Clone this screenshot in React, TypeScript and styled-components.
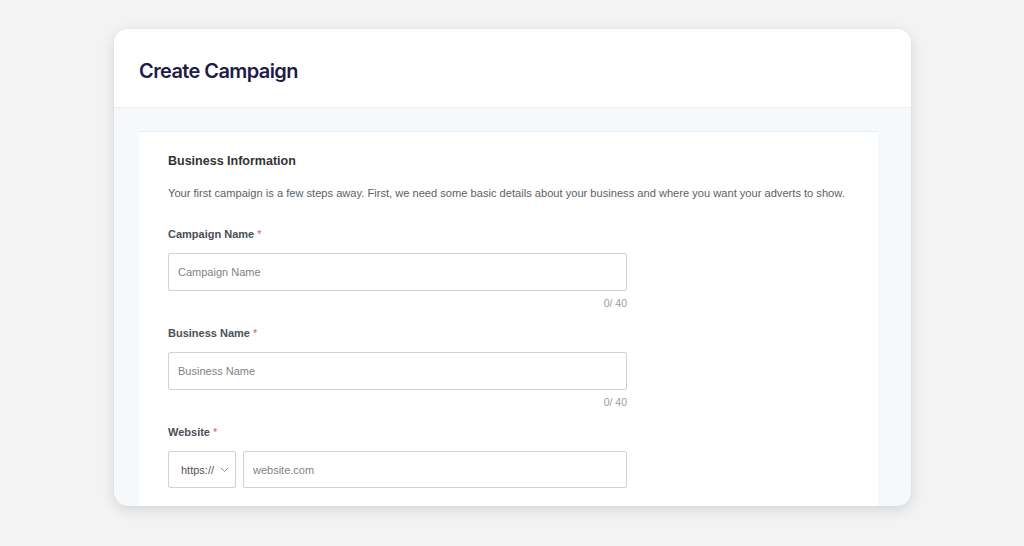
import React from "react";
import styled, { createGlobalStyle } from "styled-components";

const Global = createGlobalStyle`
  html, body { margin: 0; padding: 0; background: #f3f3f3; }
  body { font-family: "Liberation Sans", Arial, sans-serif; }
  * { box-sizing: border-box; }
`;

const Page = styled.div`
  width: 1024px;
  height: 546px;
  padding: 29px 113px 0 114px;
  overflow: hidden;
`;

const Card = styled.div`
  height: 477px;
  background: #f6f9fb;
  border-radius: 14px;
  overflow: hidden;
  box-shadow: 0 4px 14px rgba(0, 0, 0, 0.12), 0 0 2px rgba(0, 0, 0, 0.06);
  display: flex;
  flex-direction: column;
`;

const Header = styled.div`
  height: 79px;
  flex: none;
  background: #ffffff;
  border-bottom: 1px solid #e8eef3;
  display: flex;
  align-items: center;
  padding: 5px 0 0 25px;
`;

const Title = styled.h1`
  margin: 0;
  font-family: "Inter", sans-serif;
  font-weight: 600;
  font-size: 20px;
  letter-spacing: -0.6px;
  color: #1f1a48;
`;

const Body = styled.div`
  flex: 1;
  padding: 23px 33px 0 25px;
  display: flex;
`;

const Panel = styled.div`
  flex: 1;
  background: #ffffff;
  border-top: 1px solid #e3eef6;
  padding: 21px 29px 0 29px;
`;

const SectionTitle = styled.h2`
  margin: 0;
  font-size: 12.5px;
  line-height: 16px;
  font-weight: 700;
  color: #333333;
`;

const Description = styled.p`
  margin: 17px 0 0 0;
  font-size: 11.12px;
  line-height: 14px;
  color: #5b5f66;
  white-space: nowrap;
`;

const Field = styled.div<{ $first?: boolean }>`
  width: 459px;
  margin-top: ${(p) => (p.$first ? "27px" : "17px")};
  display: flex;
  flex-direction: column;
`;

const Label = styled.label`
  font-size: 11px;
  line-height: 14px;
  font-weight: 700;
  color: #4a4f57;
`;

const Required = styled.span`
  color: #e0575a;
  font-weight: 400;
  margin-left: 3px;
`;

const Input = styled.input`
  margin-top: 12px;
  height: 38px;
  width: 100%;
  border: 1.5px solid #d2d2d2;
  border-radius: 2px;
  padding: 0 9px;
  font-family: "Liberation Sans", Arial, sans-serif;
  font-size: 11px;
  color: #333;
  outline: none;
  &::placeholder { color: #808286; }
`;

const Counter = styled.div`
  margin-top: 6px;
  align-self: flex-end;
  font-size: 10.5px;
  line-height: 12px;
  color: #9a9a9a;
`;

const Row = styled.div`
  margin-top: 12px;
  display: flex;
  gap: 7px;
`;

const Select = styled.div`
  width: 68px;
  height: 37px;
  flex: none;
  border: 1.5px solid #d2d2d2;
  border-radius: 2px;
  display: flex;
  align-items: center;
  justify-content: space-between;
  padding: 0 6px 0 12px;
  font-size: 11px;
  color: #555;
`;

const UrlInput = styled(Input)`
  margin-top: 0;
  height: 37px;
  flex: 1;
`;

export default function App() {
  return (
    <>
      <Global />
      <Page>
        <Card>
          <Header>
            <Title>Create Campaign</Title>
          </Header>
          <Body>
            <Panel>
              <SectionTitle>Business Information</SectionTitle>
              <Description>
                Your first campaign is a few steps away. First, we need some basic details about your business and where you want your adverts to show.
              </Description>
              <Field $first>
                <Label>
                  Campaign Name<Required>*</Required>
                </Label>
                <Input placeholder="Campaign Name" />
                <Counter>0/ 40</Counter>
              </Field>
              <Field>
                <Label>
                  Business Name<Required>*</Required>
                </Label>
                <Input placeholder="Business Name" />
                <Counter>0/ 40</Counter>
              </Field>
              <Field>
                <Label>
                  Website<Required>*</Required>
                </Label>
                <Row>
                  <Select>
                    <span>https://</span>
                    <svg width="9" height="6" viewBox="0 0 9 6" fill="none">
                      <path d="M1 1l3.5 3.5L8 1" stroke="#9a9a9a" strokeWidth="1" />
                    </svg>
                  </Select>
                  <UrlInput placeholder="website.com" />
                </Row>
              </Field>
            </Panel>
          </Body>
        </Card>
      </Page>
    </>
  );
}
